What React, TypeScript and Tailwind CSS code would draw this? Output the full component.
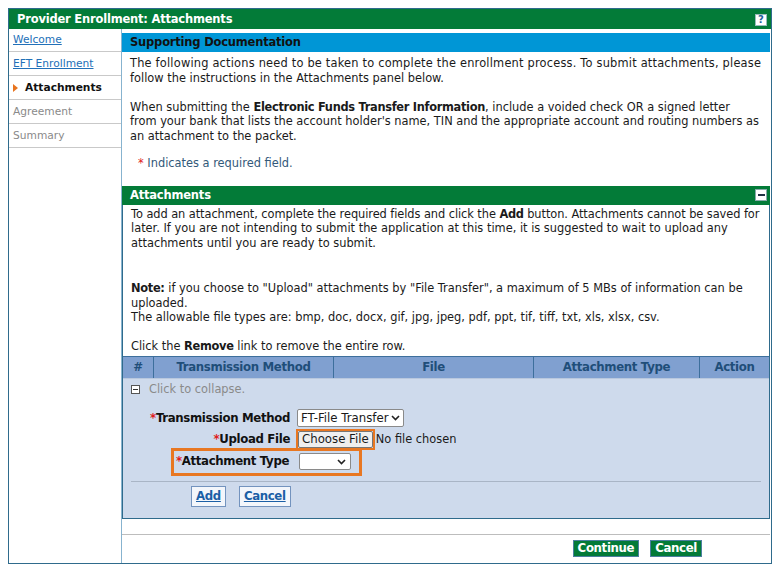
import React from "react";

const font = { fontFamily: '"DejaVu Sans", Verdana, sans-serif' };

function Chevron() {
  return (
    <svg width="9" height="6" viewBox="0 0 9 6" className="ml-auto">
      <path d="M1 1 L4.5 4.5 L8 1" fill="none" stroke="#222" strokeWidth="1.6" />
    </svg>
  );
}

function Req() {
  return <span className="text-[#e0201b]">*</span>;
}

function B({ children }: { children: React.ReactNode }) {
  return <b className="tracking-[-0.3px]">{children}</b>;
}

export default function App() {
  return (
    <div className="bg-white w-[777px] h-[566px] pt-[8px] pl-[8px] text-[11.4px] text-[#1a1a1a]" style={font}>
      <div className="w-[764px] h-[556px] border border-[#2f6b8c] flex flex-col overflow-hidden">
        {/* Title bar */}
        <div className="h-[20px] bg-[#037b38] flex items-center pl-[8px] pr-[4px] pt-[1px] shrink-0">
          <span className="text-white font-bold text-[11.5px] tracking-[-0.2px] leading-none">Provider Enrollment: Attachments</span>
          <span className="ml-auto w-[12px] h-[12px] bg-white border border-[#9bb] flex items-center justify-center text-[#1d5f9a] font-bold text-[10px] leading-none">?</span>
        </div>
        <div className="flex flex-1 min-h-0">
          {/* Left nav */}
          <div className="w-[113px] shrink-0 border-r border-[#87b3cf] text-[10.67px]">
            <div className="h-[23px] border-b border-[#c9c9c9] flex items-center pl-[4px]">
              <span className="text-[#2270b8] underline">Welcome</span>
            </div>
            <div className="h-[24px] border-b border-[#c9c9c9] flex items-center pl-[4px]">
              <span className="text-[#2270b8] underline">EFT Enrollment</span>
            </div>
            <div className="h-[24px] border-b border-[#c9c9c9] flex items-center pl-[4px]">
              <svg width="5" height="8" viewBox="0 0 5 8" className="mr-[7px]">
                <path d="M0 0 L5 4 L0 8 Z" fill="#e8741e" />
              </svg>
              <span className="font-bold text-[#111]">Attachments</span>
            </div>
            <div className="h-[24px] border-b border-[#c9c9c9] flex items-center pl-[4px]">
              <span className="text-[#8a8a8a]">Agreement</span>
            </div>
            <div className="h-[24px] border-b border-[#c9c9c9] flex items-center pl-[4px]">
              <span className="text-[#8a8a8a]">Summary</span>
            </div>
          </div>
          {/* Main */}
          <div className="w-[648px] min-w-0 shrink-0 flex flex-col pt-[4px] leading-[14.5px]">
            <div className="h-[19px] bg-[#0096d6] flex items-center pl-[8px] font-bold text-[11.5px] tracking-[-0.2px] text-[#111]">
              Supporting Documentation
            </div>
            <div className="px-[8px] pt-[4px] whitespace-nowrap">
              <p>
                <span className="tracking-[0.2px]">The following actions need to be taken to complete the enrollment process. To submit attachments, please</span>
                <br />
                follow the instructions in the Attachments panel below.
              </p>
              <p className="mt-[14.5px]">
                When submitting the <B>Electronic Funds Transfer Information</B>, include a voided check OR a signed letter
                <br />
                from your bank that lists the account holder's name, TIN and the appropriate account and routing numbers as
                <br />
                an attachment to the packet.
              </p>
              <p className="mt-[13px] pl-[8px] text-[#33597a]">
                <Req /> Indicates a required field.
              </p>
            </div>
            {/* Attachments panel */}
            <div className="mt-[15px] border border-[#2f6b8c] border-t-0 flex flex-col">
              <div className="h-[19px] bg-[#037b38] flex items-center pl-[8px] pr-[3px] -mx-px">
                <span className="text-white font-bold text-[11.5px] tracking-[-0.2px]">Attachments</span>
                <span className="ml-auto w-[12px] h-[12px] bg-white border border-[#8aa] flex items-center justify-center">
                  <span className="w-[7px] h-[2px] bg-[#234]" />
                </span>
              </div>
              <div className="px-[8px] pt-[2px] whitespace-nowrap">
                <p>
                  <span className="tracking-[-0.07px]">To add an attachment, complete the required fields and click the <B>Add</B> button. Attachments cannot be saved for</span>
                  <br />
                  later. If you are not intending to submit the application at this time, it is suggested to wait to upload any
                  <br />
                  attachments until you are ready to submit.
                </p>
                <p className="mt-[31px]">
                  <B>Note:</B> if you choose to "Upload" attachments by "File Transfer", a maximum of 5 MBs of information can be
                  <br />
                  uploaded.
                  <br />
                  The allowable file types are: bmp, doc, docx, gif, jpg, jpeg, pdf, ppt, tif, tiff, txt, xls, xlsx, csv.
                </p>
                <p className="mt-[14.5px]">
                  Click the <B>Remove</B> link to remove the entire row.
                </p>
              </div>
              <div className="mt-[2px] h-[22px] bg-[#80a0d0] border-t border-[#3d6f9c] grid grid-cols-[31px_180px_200px_166px_1fr] text-[11.75px] text-[#1f4e79] font-bold tracking-[-0.35px]">
                <div className="flex items-center justify-center border-r border-[#3d6f9c]">#</div>
                <div className="flex items-center justify-center border-r border-[#3d6f9c]">Transmission Method</div>
                <div className="flex items-center justify-center border-r border-[#3d6f9c]">File</div>
                <div className="flex items-center justify-center border-r border-[#3d6f9c]">Attachment Type</div>
                <div className="flex items-center justify-center">Action</div>
              </div>
              <div className="h-[23px] bg-[#cedaec] flex items-center pl-[8px] border-t border-[#b9c8de]">
                <span className="w-[9px] h-[9px] border border-[#555] bg-white flex items-center justify-center mr-[9px]">
                  <span className="w-[5px] h-px bg-[#333]" />
                </span>
                <span className="text-[#8a8a8a]">Click to collapse.</span>
              </div>
              <div className="bg-[#cedaec] pt-[8px] pb-[11px] flex flex-col whitespace-nowrap text-[11.75px]">
                <div className="flex items-center h-[19px]">
                  <div className="w-[167px] text-right font-bold text-[#111] tracking-[-0.35px]">
                    <Req />Transmission Method
                  </div>
                  <div className="ml-[7px] w-[107px] h-[18px] bg-white border border-[#8a8a8a] rounded-[2px] flex items-center pl-[3px] pr-[3px]">
                    <span>FT-File Transfer</span>
                    <Chevron />
                  </div>
                </div>
                <div className="flex items-center h-[21px] mt-[1px]">
                  <div className="w-[167px] text-right font-bold text-[#111] tracking-[-0.35px]">
                    <Req />Upload File
                  </div>
                  <div className="ml-[6px] flex items-center">
                    <div className="border-2 border-[#e87722]">
                      <div className="h-[17px] px-[3px] bg-[#efefef] border border-[#767676] rounded-[2px] flex items-center">Choose File</div>
                    </div>
                    <span className="ml-[1px] text-[11.4px]">No file chosen</span>
                  </div>
                </div>
                <div className="flex -mt-[2px] ml-[48px]">
                  <div className="h-[28px] w-[191px] border-[3px] border-[#e87722] flex items-center pl-[2px]">
                    <div className="font-bold text-[#111] tracking-[-0.35px]">
                      <Req />Attachment Type
                    </div>
                    <div className="ml-auto mr-[8px] w-[52px] h-[17px] bg-white border border-[#8a8a8a] rounded-[2px] flex items-center pr-[4px]">
                      <Chevron />
                    </div>
                  </div>
                </div>
                <div className="mx-[8px] mt-[5px] border-t border-[#a9b5c6]" />
                <div className="flex gap-[13px] pl-[68px] mt-[4px]">
                  <div className="h-[21px] px-[4px] bg-[#f3f6fb] border border-[#7393be] flex items-center font-bold text-[#1b5fa6] underline tracking-[-0.35px]">Add</div>
                  <div className="h-[21px] px-[4px] bg-[#f3f6fb] border border-[#7393be] flex items-center font-bold text-[#1b5fa6] underline tracking-[-0.35px]">Cancel</div>
                </div>
              </div>
            </div>
            <div className="h-[16px] border-b border-[#bdbdbd]" />
            <div className="flex justify-end gap-[11px] pr-[68px] pt-[5px] text-[11.75px]">
              <div className="h-[17px] px-[4px] bg-[#037b38] border border-[#4b7f9f] flex items-center text-white font-bold tracking-[-0.35px]">Continue</div>
              <div className="h-[17px] px-[4px] bg-[#037b38] border border-[#4b7f9f] flex items-center text-white font-bold tracking-[-0.35px]">Cancel</div>
            </div>
          </div>
        </div>
      </div>
    </div>
  );
}
